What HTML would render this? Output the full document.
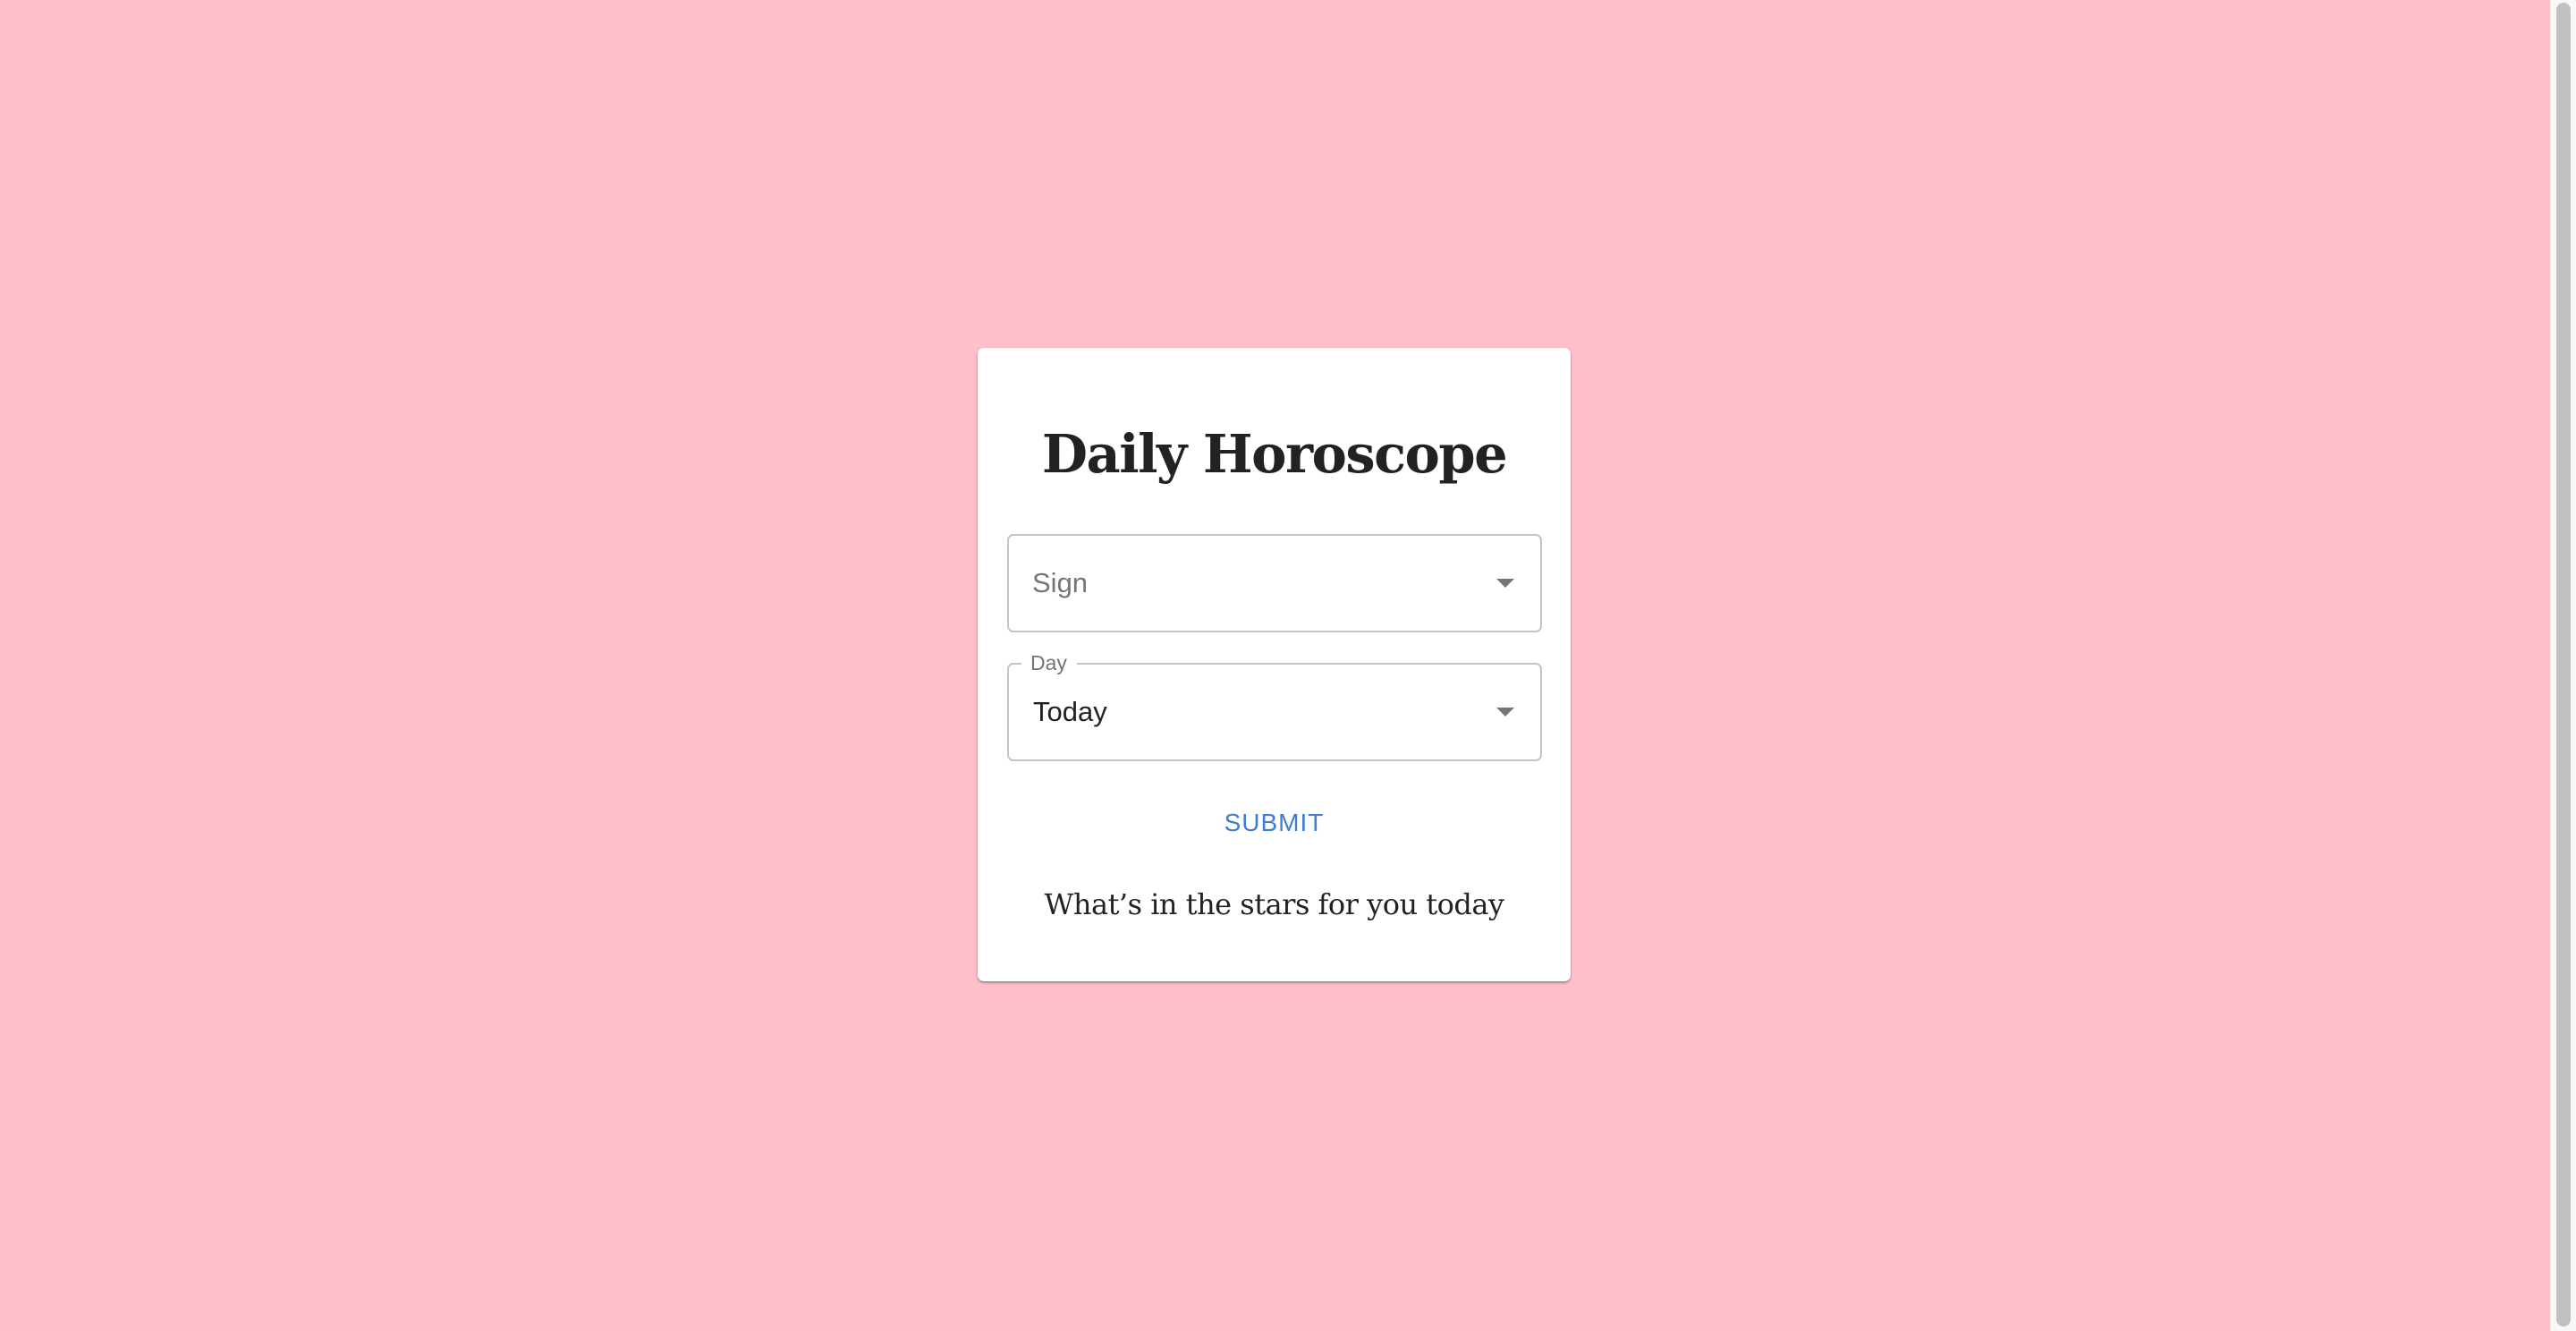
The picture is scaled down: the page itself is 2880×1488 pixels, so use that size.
<!DOCTYPE html>
<html><head><style>
html,body{margin:0;padding:0}
body{width:2880px;height:1488px;background:#ffc0cb;position:relative;overflow:hidden;font-family:"Liberation Sans",sans-serif}
.sb{position:absolute;left:2851px;top:0;width:29px;height:1488px;background:#f8f8f8;border-left:1px solid #ececec}
.th{position:absolute;left:2858px;top:3px;width:16px;height:1480px;background:#c1c1c1;border-radius:8px}
.card{position:absolute;left:1093px;top:389px;width:663px;height:708px;background:#fff;border-radius:7px;box-shadow:0 2px 2px rgba(0,0,0,.25),0 1px 4px rgba(0,0,0,.12)}
.title{position:absolute;width:663px;text-align:center;font-family:"DejaVu Serif",serif;font-weight:bold;font-size:59px;line-height:80px;color:#222;letter-spacing:-1.5px}
.f{position:absolute;left:1126px;width:594px;height:106px;border:2px solid #c4c4c4;border-radius:7px}
.lbl{position:absolute;font-size:31px;color:#757575;line-height:40px}
.arr{position:absolute;left:1673px;width:0;height:0;border-left:10px solid transparent;border-right:10px solid transparent;border-top:10px solid #757575}
.notch{position:absolute;left:1142px;top:730px;width:62px;height:20px;background:#fff}
</style></head><body>
<div class="sb"></div><div class="th"></div>
<div class="card"></div>
<div class="title" style="left:1093px;top:468px">Daily Horoscope</div>
<div class="f" style="top:597px"></div>
<div class="lbl" style="left:1154px;top:632px">Sign</div>
<div class="arr" style="top:647px"></div>
<div class="f" style="top:741px"></div>
<div class="notch"></div>
<div class="lbl" style="left:1152px;top:727px;font-size:23px;line-height:28px">Day</div>
<div class="lbl" style="left:1155px;top:776px;color:#222">Today</div>
<div class="arr" style="top:791px"></div>
<div style="position:absolute;left:1093px;width:663px;top:902px;text-align:center;font-size:28px;line-height:36px;color:#3d7fcf;letter-spacing:1px">SUBMIT</div>
<div style="position:absolute;left:1093px;width:663px;top:989px;text-align:center;font-family:'DejaVu Serif',serif;font-size:32px;line-height:44px;color:#222;letter-spacing:-0.5px">What’s in the stars for you today</div>
</body></html>
